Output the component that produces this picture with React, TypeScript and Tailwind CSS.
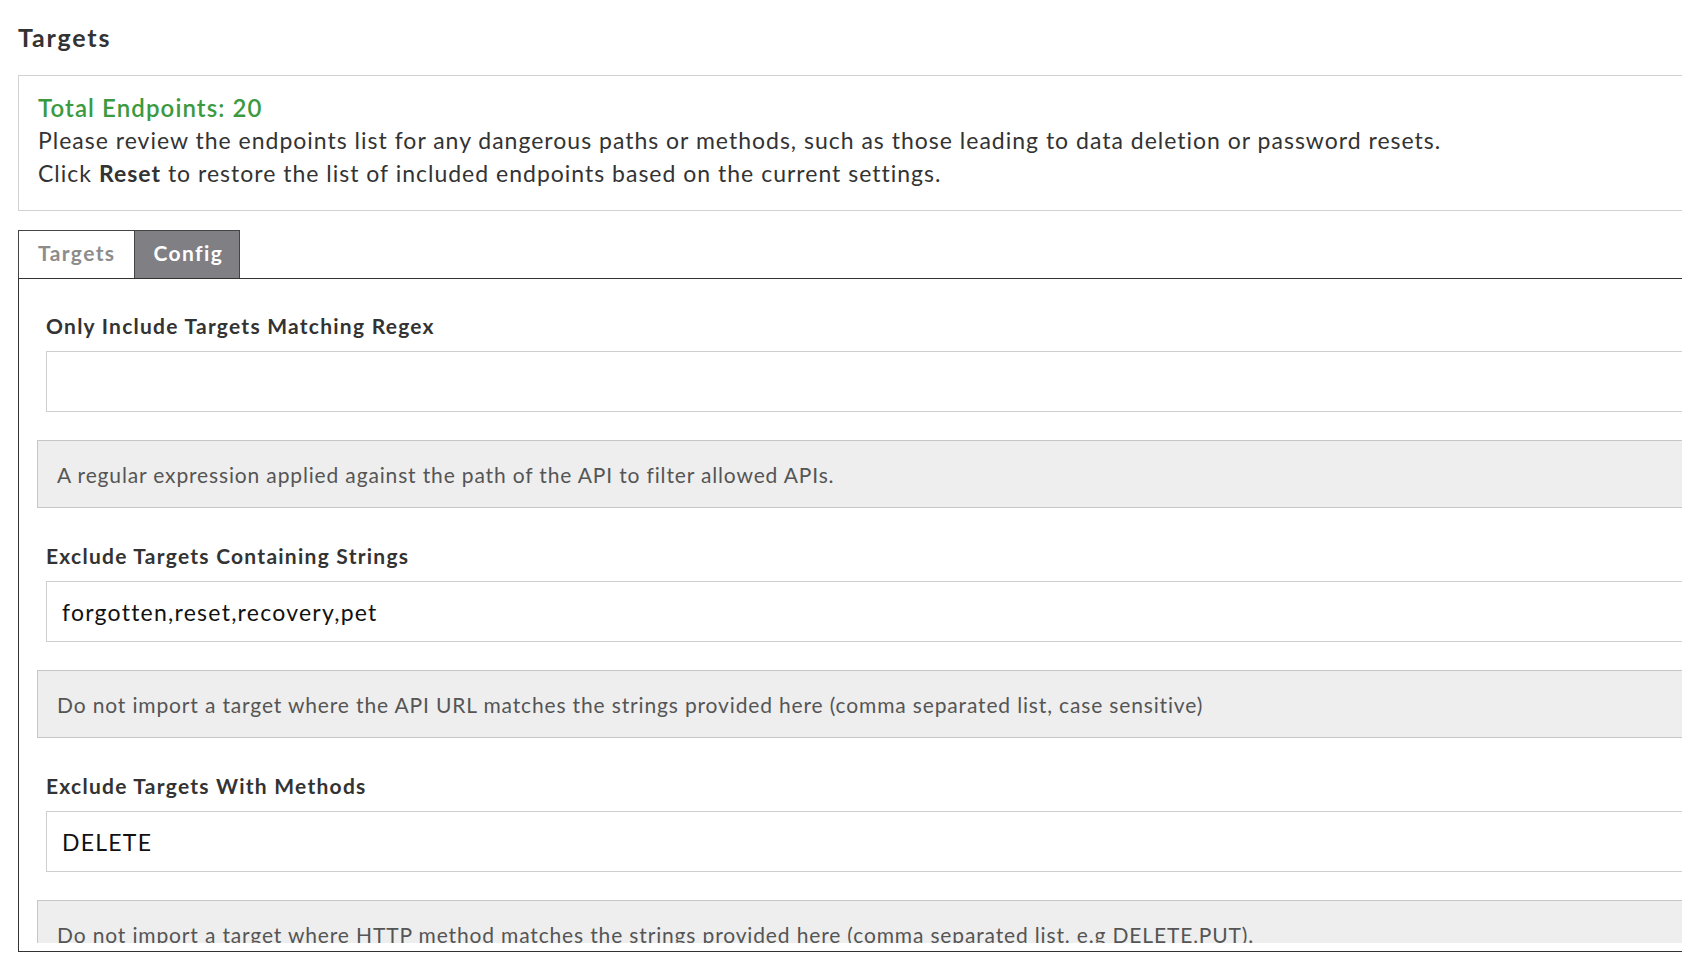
import React from "react";

const fields = [
  {
    label: "Only Include Targets Matching Regex",
    value: "",
    help: "A regular expression applied against the path of the API to filter allowed APIs.",
  },
  {
    label: "Exclude Targets Containing Strings",
    value: "forgotten,reset,recovery,pet",
    help: "Do not import a target where the API URL matches the strings provided here (comma separated list, case sensitive)",
  },
  {
    label: "Exclude Targets With Methods",
    value: "DELETE",
    help: "Do not import a target where HTTP method matches the strings provided here (comma separated list. e.g DELETE,PUT).",
  },
];

export default function App() {
  return (
    <div
      className="min-h-[978px] w-full bg-white pl-[18px] pt-[22px] text-[#333]"
      style={{ fontFamily: "Lato, 'Noto Sans', sans-serif" }}
    >
      <h1 className="text-[25px] font-bold leading-[30px] tracking-[1.8px] text-[#333]">Targets</h1>

      <div className="mt-[23px] border border-r-0 border-[#d2d2d2] pl-[19px] pt-[16px] pb-[20px]">
        <div className="text-[24px] font-semibold leading-[32px] tracking-[1.1px] text-[#3b9a40]">
          Total Endpoints: 20
        </div>
        <div className="text-[23px] leading-[33px] tracking-[1px] text-[#333]">
          Please review the endpoints list for any dangerous paths or methods, such as those leading to data deletion or password resets.
        </div>
        <div className="text-[23px] leading-[33px] tracking-[1px] text-[#333]">
          Click <span className="font-bold">Reset</span> to restore the list of included endpoints based on the current settings.
        </div>
      </div>

      <div className="mt-[19px] flex">
        <div className="border border-b-0 border-[#444] bg-white pl-[19px] pr-[18px] pt-[9px] pb-[13px] text-[21px] font-bold leading-[25px] tracking-[1.4px] text-[#8c8c8c]">
          Targets
        </div>
        <div className="border border-b-0 border-l-0 border-[#444] bg-[#7f7f84] pl-[19px] pr-[16px] pt-[9px] pb-[13px] text-[21px] font-bold leading-[25px] tracking-[1.4px] text-white">
          Config
        </div>
      </div>

      <div className="flex h-[674px] flex-col border border-r-0 border-[#333] pb-[8px]">
        <div className="flex-1 overflow-hidden pl-[18px] pt-[34px]">
          {fields.map((f, i) => (
            <div key={i} className={i === 0 ? "" : "mt-[35px]"}>
              <div className="ml-[9px] text-[21px] font-bold leading-[25px] tracking-[1.25px] text-[#333]">
                {f.label}
              </div>
              <div className="ml-[9px] mt-[13px] flex h-[61px] items-center border border-r-0 border-[#cfcfcf] bg-white pl-[15px] text-[23px] leading-[28px] tracking-[1.25px] text-[#111]">
                {f.value}
              </div>
              <div className="mt-[28px] flex h-[68px] items-center border border-r-0 border-[#c6c6c6] bg-[#eeeeee] pl-[19px] text-[21px] leading-[25px] tracking-[0.85px] text-[#555]">
                {f.help}
              </div>
            </div>
          ))}
        </div>
      </div>
    </div>
  );
}
